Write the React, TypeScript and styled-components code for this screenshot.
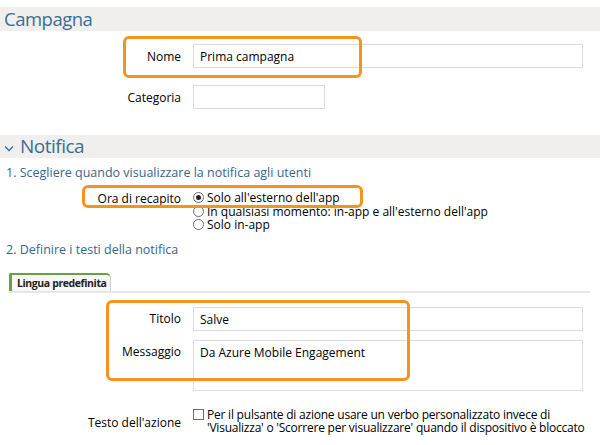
import React from "react";
import styled, { createGlobalStyle } from "styled-components";

const Global = createGlobalStyle`
  html, body { margin: 0; padding: 0; background: #fff; }
  body { font-family: "Segoe UI", "Open Sans", "Noto Sans", sans-serif; color: #000; }
`;

const Page = styled.div`
  position: relative;
  width: 600px;
  height: 445px;
  overflow: hidden;
  padding-top: 7px;
  box-sizing: border-box;
`;

const SectionBand = styled.div<{ $h: number; $fs: number }>`
  height: ${(p) => p.$h}px;
  background: #f0efed;
  display: flex;
  align-items: center;
  padding-left: 4px;
  gap: 5px;
  color: #3c6d94;
  font-size: ${(p) => p.$fs}px;
  letter-spacing: -0.5px;
  line-height: 1;
`;

const Row = styled.div<{ $mt: number; $align?: string }>`
  display: grid;
  grid-template-columns: 181px 390px;
  column-gap: 12px;
  align-items: ${(p) => p.$align || "center"};
  margin-top: ${(p) => p.$mt}px;
  font-size: 12px;
`;

const Label = styled.div<{ $pt?: number }>`
  text-align: right;
  padding-top: ${(p) => p.$pt || 0}px;
  line-height: 15px;
`;

const Input = styled.div<{ $w?: number; $h?: number; $pt?: number }>`
  width: ${(p) => p.$w || 390}px;
  height: ${(p) => p.$h || 24}px;
  box-sizing: border-box;
  border: 1px solid #dcdcdc;
  padding: ${(p) => p.$pt || 4}px 6px 0;
  font-size: 12px;
  line-height: 15px;
`;

const Step = styled.div<{ $mt: number }>`
  margin-top: ${(p) => p.$mt}px;
  padding-left: 6px;
  color: #376590;
  font-size: 12.5px;
  line-height: 16px;
`;

const Radios = styled.div`
  display: flex;
  flex-direction: column;
`;

const RadioLine = styled.div`
  display: flex;
  align-items: center;
  gap: 3px;
  height: 13.5px;
  font-size: 12px;
  line-height: 13.5px;
`;

const RadioDot = styled.span<{ $on?: boolean }>`
  width: 11px;
  height: 11px;
  border-radius: 50%;
  border: 1px solid #6d6d6d;
  box-sizing: border-box;
  display: inline-flex;
  align-items: center;
  justify-content: center;
  &::after {
    content: "";
    width: 5px;
    height: 5px;
    border-radius: 50%;
    background: ${(p) => (p.$on ? "#222" : "transparent")};
  }
`;

const TabBar = styled.div`
  margin-top: 15px;
  margin-left: 9px;
  margin-right: 10px;
  border-bottom: 2px solid #e6e6e6;
  display: flex;
`;

const Tab = styled.div`
  height: 18px;
  box-sizing: border-box;
  padding: 2px 4px 0 5px;
  border: 1px solid #cfcfcf;
  border-left: 3px solid #68a33a;
  border-top: 2px solid #68a33a;
  border-bottom: none;
  border-top-right-radius: 5px;
  border-top-left-radius: 2px;
  background: #f7f7f7;
  font-size: 10.5px;
  letter-spacing: -0.4px;
  font-weight: bold;
  color: #222;
  line-height: 1.2;
`;

const CheckWrap = styled.div`
  display: flex;
  gap: 3px;
  align-items: flex-start;
  font-size: 12px;
  letter-spacing: -0.22px;
  line-height: 13px;
  white-space: nowrap;
`;

const CheckBox = styled.span`
  flex: none;
  width: 11px;
  height: 11px;
  margin-top: 1px;
  border: 1px solid #6d6d6d;
  box-sizing: border-box;
`;

const Highlight = styled.div<{ $x: number; $y: number; $w: number; $h: number }>`
  position: absolute;
  left: ${(p) => p.$x}px;
  top: ${(p) => p.$y}px;
  width: ${(p) => p.$w}px;
  height: ${(p) => p.$h}px;
  box-sizing: border-box;
  border: 3px solid #f7921e;
  border-radius: 6px;
  pointer-events: none;
`;

const Chevron = () => (
  <svg width="10" height="7" viewBox="0 0 10 7" style={{ marginTop: 3, marginRight: 1 }}>
    <path d="M1 1.5 L5 5.5 L9 1.5" fill="none" stroke="#3c6d94" strokeWidth="1.3" />
  </svg>
);

export default function App() {
  return (
    <Page>
      <Global />
      <SectionBand $h={24} $fs={18.5}>Campagna</SectionBand>
      <Row $mt={13}>
        <Label>Nome</Label>
        <Input>Prima campagna</Input>
      </Row>
      <Row $mt={17}>
        <Label>Categoria</Label>
        <Input $w={132} />
      </Row>
      <div style={{ height: 26 }} />
      <SectionBand $h={23} $fs={19}>
        <Chevron />
        Notifica
      </SectionBand>
      <Step $mt={7}>1. Scegliere quando visualizzare la notifica agli utenti</Step>
      <Row $mt={10} $align="start">
        <Label $pt={0}>Ora di recapito</Label>
        <Radios>
          <RadioLine>
            <RadioDot $on />
            Solo all'esterno dell'app
          </RadioLine>
          <RadioLine>
            <RadioDot />
            In qualsiasi momento: in-app e all'esterno dell'app
          </RadioLine>
          <RadioLine>
            <RadioDot />
            Solo in-app
          </RadioLine>
        </Radios>
      </Row>
      <Step $mt={10}>2. Definire i testi della notifica</Step>
      <TabBar>
        <Tab>Lingua predefinita</Tab>
      </TabBar>
      <Row $mt={14}>
        <Label>Titolo</Label>
        <Input>Salve</Input>
      </Row>
      <Row $mt={9} $align="start">
        <Label $pt={4}>Messaggio</Label>
        <Input $h={51} $pt={4}>Da Azure Mobile Engagement</Input>
      </Row>
      <Row $mt={17} $align="start">
        <Label $pt={7}>Testo dell'azione</Label>
        <CheckWrap>
          <CheckBox />
          <span>
            Per il pulsante di azione usare un verbo personalizzato invece di
            <br />
            'Visualizza' o 'Scorrere per visualizzare' quando il dispositivo è bloccato
          </span>
        </CheckWrap>
      </Row>
      <Highlight $x={123} $y={36} $w={239} $h={42} />
      <Highlight $x={82} $y={185} $w={281} $h={23} />
      <Highlight $x={106} $y={300} $w={304} $h={81} />
    </Page>
  );
}
